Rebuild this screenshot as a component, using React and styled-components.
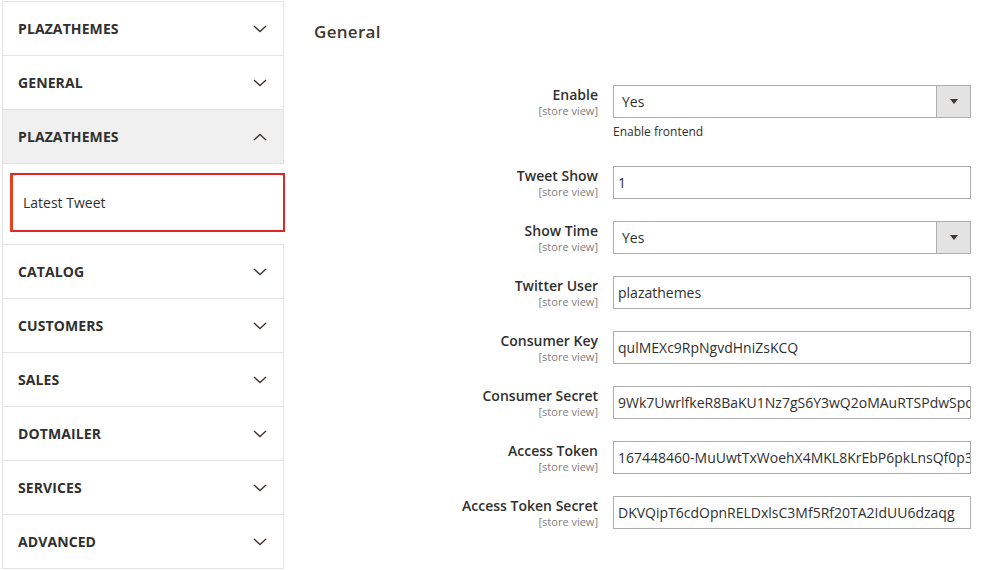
import React from 'react';
import styled, { createGlobalStyle } from 'styled-components';

const GlobalStyle = createGlobalStyle`
  html, body {
    margin: 0;
    padding: 0;
    background: #fff;
  }
  body {
    font-family: "Open Sans", "Liberation Sans", sans-serif;
    color: #303030;
  }
`;

const sections = [
  { title: 'PLAZATHEMES' },
  { title: 'GENERAL' },
  { title: 'PLAZATHEMES', open: true, items: ['Latest Tweet'] },
  { title: 'CATALOG' },
  { title: 'CUSTOMERS' },
  { title: 'SALES' },
  { title: 'DOTMAILER' },
  { title: 'SERVICES' },
  { title: 'ADVANCED' },
];

const fields = [
  { label: 'Enable', value: 'Yes', select: true, note: 'Enable frontend' },
  { label: 'Tweet Show', value: '1' },
  { label: 'Show Time', value: 'Yes', select: true },
  { label: 'Twitter User', value: 'plazathemes' },
  { label: 'Consumer Key', value: 'qulMEXc9RpNgvdHniZsKCQ' },
  { label: 'Consumer Secret', value: '9Wk7UwrlfkeR8BaKU1Nz7gS6Y3wQ2oMAuRTSPdwSpdeXq' },
  { label: 'Access Token', value: '167448460-MuUwtTxWoehX4MKL8KrEbP6pkLnsQf0p3Xy' },
  { label: 'Access Token Secret', value: 'DKVQipT6cdOpnRELDxlsC3Mf5Rf20TA2IdUU6dzaqg' },
];

const Chevron = ({ up }) => (
  <svg width="14" height="8" viewBox="0 0 14 8">
    <polyline
      points={up ? '1,7 7,1.5 13,7' : '1,1 7,6.5 13,1'}
      fill="none"
      stroke="#41362f"
      strokeWidth="1.4"
    />
  </svg>
);

const App = () => {
  return (
    <>
      <GlobalStyle />
      <Page>
        <Sidebar>
          {sections.map((s, i) => (
            <Section key={i}>
              <SectionHead open={s.open}>
                <SectionTitle>{s.title}</SectionTitle>
                <Chevron up={s.open} />
              </SectionHead>
              {s.items && (
                <SubList>
                  {s.items.map((it) => (
                    <SubItem key={it}>{it}</SubItem>
                  ))}
                </SubList>
              )}
            </Section>
          ))}
        </Sidebar>
        <Main>
          <Heading>General</Heading>
          <Form>
            {fields.map((f) => (
              <FieldRow key={f.label} hasNote={!!f.note}>
                <LabelCol>
                  <Label>{f.label}</Label>
                  <Scope>[store view]</Scope>
                </LabelCol>
                <Control>
                  <InputBox>
                    <InputText select={f.select}>{f.value}</InputText>
                    {f.select && (
                      <SelectArrow>
                        <svg width="8" height="5" viewBox="0 0 8 5">
                          <polygon points="0,0 8,0 4,5" fill="#41362f" />
                        </svg>
                      </SelectArrow>
                    )}
                  </InputBox>
                  {f.note && <Note>{f.note}</Note>}
                </Control>
              </FieldRow>
            ))}
          </Form>
        </Main>
      </Page>
    </>
  );
};
export default App;

const Page = styled.div`
  display: flex;
  align-items: flex-start;
  padding: 1px 0 0 2px;
  width: 987px;
  box-sizing: border-box;
`;

const Sidebar = styled.nav`
  width: 282px;
  flex-shrink: 0;
  border: 1px solid #e3e3e3;
  border-bottom: none;
  box-sizing: border-box;
  background: #fff;
`;

const Section = styled.div`
  border-bottom: 1px solid #e3e3e3;
`;

const SectionHead = styled.div`
  height: 53px;
  display: flex;
  align-items: center;
  justify-content: space-between;
  padding: 0 16px 0 15px;
  background: ${({ open }) => (open ? '#f0f0f0' : '#fff')};
  border-bottom: ${({ open }) => (open ? '1px solid #e3e3e3' : 'none')};
`;

const SectionTitle = styled.span`
  font-size: 14px;
  font-weight: 700;
  color: #303030;
  letter-spacing: 0.1px;
`;

const SubList = styled.div`
  padding: 9px 0 12px 7px;
  margin-right: -2px;
  background: #fff;
`;

const SubItem = styled.div`
  height: 55px;
  display: flex;
  align-items: center;
  padding-left: 10px;
  border: 2px solid #e22626;
  border-left: 3px solid #e8401c;
  font-size: 14px;
  color: #303030;
  background: #fff;
`;

const Main = styled.main`
  flex: 1;
  padding: 19px 16px 0 30px;
`;

const Heading = styled.h2`
  margin: 0;
  font-size: 17px;
  line-height: 24px;
  font-weight: 600;
  color: #41362f;
  letter-spacing: 0.3px;
`;

const Form = styled.div`
  margin-top: 41px;
  display: flex;
  flex-direction: column;
`;

const FieldRow = styled.div`
  display: grid;
  grid-template-columns: 284px 358px;
  column-gap: 15px;
  margin-bottom: ${({ hasNote }) => (hasNote ? '26px' : '22px')};
`;

const LabelCol = styled.div`
  display: flex;
  flex-direction: column;
  align-items: flex-end;
  padding-top: 1px;
  text-align: right;
`;

const Label = styled.span`
  font-size: 14px;
  line-height: 18px;
  font-weight: 600;
  color: #303030;
`;

const Scope = styled.span`
  font-size: 11px;
  line-height: 14px;
  color: #808080;
`;

const Control = styled.div`
  display: flex;
  flex-direction: column;
`;

const InputBox = styled.div`
  height: 33px;
  box-sizing: border-box;
  border: 1px solid #adadad;
  display: flex;
  align-items: stretch;
  background: #fff;
  overflow: hidden;
`;

const InputText = styled.span`
  flex: 1;
  min-width: 0;
  display: flex;
  align-items: center;
  padding-left: ${({ select }) => (select ? '8px' : '4px')};
  font-size: 14px;
  color: #303030;
  white-space: nowrap;
  overflow: hidden;
`;

const SelectArrow = styled.span`
  width: 33px;
  flex-shrink: 0;
  display: flex;
  align-items: center;
  justify-content: center;
  background: #e3e3e3;
  border-left: 1px solid #adadad;
`;

const Note = styled.span`
  margin-top: 6px;
  font-size: 12px;
  line-height: 16px;
  color: #303030;
`;
